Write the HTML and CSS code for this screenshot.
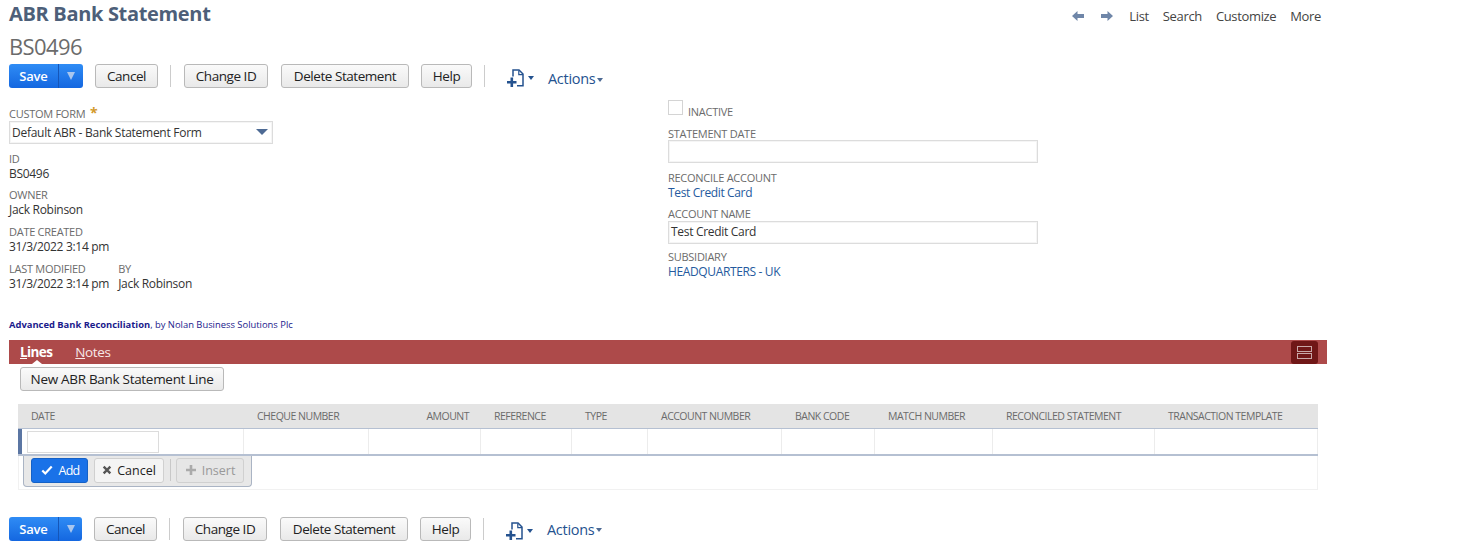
FILE: index.html
```html
<!DOCTYPE html>
<html lang="en">
<head>
<meta charset="utf-8">
<title>ABR Bank Statement</title>
<link rel="stylesheet" href="styles.css">
</head>
<body>
<svg class="defs" width="0" height="0" aria-hidden="true">
  <symbol id="newdoc" viewBox="0 0 20 18">
    <path d="M8 7.500V1h6l4 4V16.800h-6" fill="none" stroke="currentColor" stroke-width="1.500"/>
    <path d="M13.800 1.500V5.600H18" fill="none" stroke="currentColor" stroke-width="1.200"/>
    <path d="M5.500 8.500h2.600v3.400h3.400v2.600H8.100v3.400H5.500v-3.400H2v-2.600h3.500z" fill="currentColor"/>
  </symbol>
</svg>
<header class="top">
  <h1 class="title">ABR Bank Statement</h1>
  <nav class="nav">
    <svg class="arrow" viewBox="0 0 14 12"><path d="M6.500 1 1 6l5.500 5V8H13V4H6.500z" fill="currentColor"/></svg>
    <svg class="arrow" viewBox="0 0 14 12"><path d="M7.500 1 13 6l-5.500 5V8H1V4h6.500z" fill="currentColor"/></svg>
    <a class="nav-link nav-first">List</a>
    <a class="nav-link">Search</a>
    <a class="nav-link">Customize</a>
    <a class="nav-link">More</a>
  </nav>
</header>
<div class="record">BS0496</div>
<div class="toolbar">
  <div class="save"><span class="save-main">Save</span><span class="save-drop"><i class="tri-light"></i></span></div>
  <button class="btn btn-cancel">Cancel</button>
  <span class="sep"></span>
  <button class="btn btn-id">Change ID</button>
  <button class="btn btn-del">Delete Statement</button>
  <button class="btn btn-help">Help</button>
  <span class="sep sep-2"></span>
  <svg class="doc"><use href="#newdoc"/></svg><i class="tri-blue"></i>
  <span class="actions">Actions</span><i class="tri-blue tri-act"></i>
</div>
<main class="form">
  <section class="col-left">
    <div class="label label-first">CUSTOM FORM <span class="star">*</span></div>
    <div class="select">Default ABR - Bank Statement Form<i class="tri-select"></i></div>
    <div class="label gap-a">ID</div>
    <div class="value">BS0496</div>
    <div class="label gap-o">OWNER</div>
    <div class="value">Jack Robinson</div>
    <div class="label gap-b">DATE CREATED</div>
    <div class="value">31/3/2022 3:14 pm</div>
    <div class="pair gap-b">
      <div><div class="label">LAST MODIFIED</div><div class="value">31/3/2022 3:14 pm</div></div>
      <div><div class="label">BY</div><div class="value">Jack Robinson</div></div>
    </div>
  </section>
  <section class="col-right">
    <div class="check-row"><span class="check"></span><span class="label">INACTIVE</span></div>
    <div class="label gap-c">STATEMENT DATE</div>
    <div class="input input-date"></div>
    <div class="label gap-d">RECONCILE ACCOUNT</div>
    <a class="link">Test Credit Card</a>
    <div class="label gap-e">ACCOUNT NAME</div>
    <div class="input">Test Credit Card</div>
    <div class="label gap-f">SUBSIDIARY</div>
    <a class="link">HEADQUARTERS - UK</a>
  </section>
</main>
<p class="credit"><b>Advanced Bank Reconciliation</b>, by Nolan Business Solutions Plc</p>
<div class="tabs">
  <span class="tab tab-on"><u>L</u>ines</span>
  <span class="tab"><u>N</u>otes</span>
  <span class="layout-btn"><i></i><i></i></span>
</div>
<button class="btn btn-new">New ABR Bank Statement Line</button>
<div class="grid-wrap">
  <div class="g-row g-head">
    <span>DATE</span><span>CHEQUE NUMBER</span><span class="num">AMOUNT</span><span>REFERENCE</span><span>TYPE</span><span>ACCOUNT NUMBER</span><span>BANK CODE</span><span>MATCH NUMBER</span><span>RECONCILED STATEMENT</span><span>TRANSACTION TEMPLATE</span>
  </div>
  <div class="g-row g-edit">
    <span class="date-cell"><i class="date-input"></i></span><span></span><span></span><span></span><span></span><span></span><span></span><span></span><span></span><span></span>
  </div>
  <div class="g-foot">
    <div class="machine">
      <button class="m-btn m-add"><svg viewBox="0 0 14 12"><path d="M1.500 6.500 5 10l7.500-8" fill="none" stroke="currentColor" stroke-width="2.600"/></svg>Add</button>
      <button class="m-btn m-cancel"><svg viewBox="0 0 12 12"><path d="m2 2 8 8m0-8-8 8" fill="none" stroke="currentColor" stroke-width="2.800"/></svg>Cancel</button>
      <span class="m-sep"></span>
      <button class="m-btn m-insert"><svg viewBox="0 0 12 12"><path d="M6 1v10M1 6h10" fill="none" stroke="currentColor" stroke-width="2.600"/></svg>Insert</button>
    </div>
  </div>
</div>
<div class="toolbar toolbar-bottom">
  <div class="save"><span class="save-main">Save</span><span class="save-drop"><i class="tri-light"></i></span></div>
  <button class="btn btn-cancel">Cancel</button>
  <span class="sep"></span>
  <button class="btn btn-id">Change ID</button>
  <button class="btn btn-del">Delete Statement</button>
  <button class="btn btn-help">Help</button>
  <span class="sep sep-2"></span>
  <svg class="doc"><use href="#newdoc"/></svg><i class="tri-blue"></i>
  <span class="actions">Actions</span><i class="tri-blue tri-act"></i>
</div>
</body>
</html>
```
FILE: styles.css
```css
* { box-sizing: border-box; }
html, body { margin: 0; padding: 0; }
body { width: 1474px; height: 546px; overflow: hidden; background: #fff; font-family: "Open Sans", sans-serif; color: #333; font-size: 13px; }
.defs { position: absolute; }
button { font-family: inherit; cursor: default; }

.top { display: flex; justify-content: space-between; align-items: flex-start; height: 33px; padding: 0 153px 0 9px; }
.title { margin: 0; font-size: 20px; line-height: 28px; font-weight: 700; color: #4d5f79; letter-spacing: -0.330px; }
.nav { display: flex; align-items: center; height: 32px; color: #5a5a5a; }
.arrow { width: 14px; height: 12px; color: #6f86a8; margin-right: 15px; }
.nav-link { font-size: 13px; color: #444; margin-left: 14px; letter-spacing: -0.350px; }
.nav-first { margin-left: 0; }

.record { margin-left: 9px; font-size: 22px; line-height: 26px; height: 31px; color: #6b6b6b; letter-spacing: -0.600px; }

.toolbar { display: flex; align-items: center; height: 24px; padding-left: 9px; }
.save { display: flex; width: 74px; height: 24px; border-radius: 3px; overflow: hidden; background: linear-gradient(#2f8cf5, #1467e0); color: #fff; font-weight: 600; font-size: 13px; letter-spacing: -0.200px; }
.save-main { width: 49px; line-height: 24px; text-align: center; }
.save-drop { flex: 1; border-left: 1px solid #1556b8; display: flex; align-items: center; justify-content: center; }
.tri-light { width: 0; height: 0; border-left: 4px solid transparent; border-right: 4px solid transparent; border-top: 8px solid #a9c6ee; }
.btn { height: 24px; padding: 0; border: 1px solid #b9b9b9; border-radius: 3px; background: linear-gradient(#fafafa, #e9e9e9); color: #222; font-size: 13.500px; font-weight: 400; text-align: center; letter-spacing: -0.450px; }
.btn-cancel { width: 63px; margin-left: 12px; }
.sep { width: 1px; height: 22px; background: #ccc; margin-left: 12px; }
.btn-id { width: 84px; margin-left: 13px; }
.btn-del { width: 128px; margin-left: 13px; }
.btn-help { width: 51px; margin-left: 12px; }
.sep-2 { margin-left: 12px; }
.doc { width: 20px; height: 18px; margin: 4px 0 0 20px; color: #24528f; }
.tri-blue { width: 0; height: 0; border-left: 3.500px solid transparent; border-right: 3.500px solid transparent; border-top: 4px solid #24528f; margin: 4px 0 0 3px; }
.actions { margin: 4px 0 0 14px; color: #24528f; font-size: 14.500px; letter-spacing: -0.300px; }
.tri-act { border-top-color: #4d6a94; margin: 7px 0 0 2px; }

.form { display: flex; height: 230px; padding: 0 0 0 9px; }
.col-left { width: 659px; padding-top: 19px; }
.col-right { width: 370px; padding-top: 12px; }
.label { font-size: 11px; line-height: 14px; color: #6b6b6b; letter-spacing: -0.270px; }
.star { color: #d39a2c; font-size: 14px; line-height: 12px; font-weight: 700; margin-left: 2px; }
.select { position: relative; width: 264px; height: 23px; margin-top: 0; border: 1px solid #dcdcdc; box-shadow: inset 0 0 0 1px #f5f5f5; font-size: 12px; line-height: 21px; padding-left: 2px; color: #333; letter-spacing: -0.270px; }
.tri-select { position: absolute; right: 4px; top: 7px; width: 0; height: 0; border-left: 6px solid transparent; border-right: 6px solid transparent; border-top: 6px solid #4d6a94; }
.value { font-size: 12px; line-height: 15px; color: #333; letter-spacing: -0.300px; }
.gap-a { margin-top: 8px; }
.gap-o { margin-top: 7px; }
.gap-b { margin-top: 8px; }
.pair { display: flex; gap: 9px; }
.check-row { display: flex; align-items: flex-end; height: 18px; }
.check { width: 15px; height: 15px; border: 1px solid #d4d4d4; margin: 0 5px 3px 0; }
.check-row .label { line-height: 12px; }
.gap-c { margin-top: 9px; }
.gap-d { margin-top: 8px; }
.gap-e { margin-top: 7px; }
.gap-f { margin-top: 6px; }
.input { width: 370px; height: 23px; border: 1px solid #dcdcdc; box-shadow: inset 0 0 0 1px #f5f5f5; font-size: 12px; line-height: 20px; padding-left: 2px; margin-top: 0; color: #333; letter-spacing: -0.300px; }
.input-date { margin-top: -1px; }
.link { display: block; font-size: 12px; line-height: 15px; color: #255a9e; letter-spacing: -0.360px; }

.credit { margin: 0 0 8px 9px; height: 14px; font-size: 9.400px; line-height: 14px; color: #1a1a8c; }
.credit b { font-weight: 700; }

.tabs { position: relative; display: flex; align-items: center; width: 1318px; height: 24px; margin-left: 9px; background: #ad4a4a; padding-left: 11px; color: #fff; }
.tab { font-size: 13.500px; margin-right: 23px; color: #f7e8e8; letter-spacing: -0.400px; }
.tab-on { font-weight: 700; color: #fff; letter-spacing: -0.600px; }
.tab-on::after { content: ""; position: absolute; left: 23px; bottom: 0; border-left: 5px solid transparent; border-right: 5px solid transparent; border-bottom: 4px solid #fff; }
.layout-btn { position: absolute; right: 9px; top: 1px; width: 27px; height: 23px; border-radius: 3px; background: #701717; display: flex; flex-direction: column; align-items: center; justify-content: center; gap: 1px; }
.layout-btn i { width: 15px; height: 6px; border: 1px solid #c9a7a7; }

.btn-new { display: block; width: 204px; margin: 3px 0 0 20px; letter-spacing: -0.300px; }

.grid-wrap { width: 1300px; height: 86px; margin: 13px 0 0 18px; }
.g-row { display: grid; grid-template-columns: 226px 125px 112px 91px 76px 134px 93px 118px 162px 163px; }
.g-head { height: 24px; background: #e4e4e4; font-size: 10.500px; line-height: 24px; color: #6b6b6b; letter-spacing: -0.500px; }
.g-head span { padding-left: 13px; }
.g-head .num { padding: 0 12px 0 0; text-align: right; }
.g-edit { height: 28px; border-top: 1px solid #b5c0d2; border-bottom: 2px solid #b5c0d2; box-shadow: inset 4px 0 0 #5b76a3; }
.g-edit span { border-right: 1px solid #ececec; }
.date-cell { padding: 2px 0 0 9px; }
.date-input { display: block; width: 132px; height: 22px; border: 1px solid #dcdcdc; background: #fff; }
.g-foot { height: 34px; border: 1px solid #f1f1f1; border-top: 0; }
.machine { display: flex; align-items: center; width: 229px; height: 31px; margin-left: 4px; padding: 0 0 2px 7px; border: 1px solid #aab4c4; border-top: 0; border-radius: 0 0 4px 4px; background: #e8e8e8; }
.m-btn { display: flex; align-items: center; justify-content: center; gap: 5px; height: 25px; padding: 0; border: 1px solid #d0d0d0; border-radius: 3px; font-size: 12.500px; font-weight: 400; background: #f4f4f4; color: #222; }
.m-btn svg { width: 12px; height: 12px; }
.m-add { width: 57px; gap: 5px; padding-left: 2px; background: #1a72e8; border-color: #1561c6; color: #fff; letter-spacing: -0.700px; }
.m-cancel { width: 70px; margin-left: 6px; }
.m-cancel svg { color: #555; width: 10px; height: 10px; }
.m-sep { width: 1px; height: 22px; margin-left: 6px; background: #c8c8c8; }
.m-insert { width: 68px; margin-left: 5px; color: #999; background: #e6e6e6; }
.m-insert svg { color: #aaa; }

.toolbar-bottom { margin-top: 27px; padding-left: 9px; }
.toolbar-bottom .save { width: 73px; }
.toolbar-bottom .doc { margin: 4px 0 0 20px; }
.toolbar-bottom .tri-blue { margin-top: 3px; }
.toolbar-bottom .actions { margin-top: 0; }
.toolbar-bottom .tri-act { margin-top: 2px; }
```
